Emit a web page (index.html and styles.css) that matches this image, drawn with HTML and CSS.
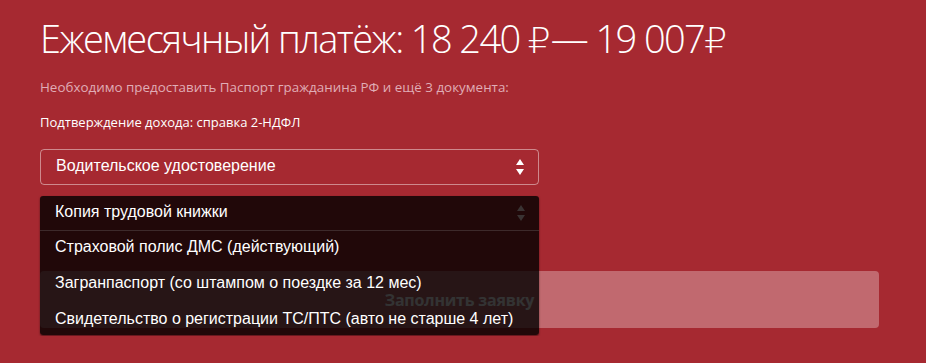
FILE: index.html
```html
<!DOCTYPE html>
<html lang="ru">
<head>
<meta charset="utf-8">
<link rel="stylesheet" href="styles.css">
</head>
<body>
<div class="page">
  <h1 class="title">Ежемесячный платёж: 18 240 <span class="rub">₽</span>— 19 007<span class="rub">₽</span></h1>
  <p class="note">Необходимо предоставить Паспорт гражданина РФ и ещё 3 документа:</p>
  <p class="income">Подтверждение дохода: справка 2-НДФЛ</p>
  <div class="select">
    <span>Водительское удостоверение</span>
    <span class="arrows"><i class="up"></i><i class="down"></i></span>
  </div>
  <div class="stack">
    <div class="button">Заполнить заявку</div>
    <div class="dropdown">
      <div class="dd-head">
        <span>Копия трудовой книжки</span>
        <span class="arrows dim"><i class="up"></i><i class="down"></i></span>
      </div>
      <ul class="dd-list">
        <li>Страховой полис ДМС (действующий)</li>
        <li>Загранпаспорт (со штампом о поездке за 12 мес)</li>
        <li>Свидетельство о регистрации ТС/ПТС (авто не старше 4 лет)</li>
      </ul>
    </div>
  </div>
</div>
</body>
</html>
```

FILE: styles.css
```css
html, body {
  margin: 0;
  padding: 0;
  background: #a62931;
  overflow: hidden;
}
.page {
  padding: 0 47px 0 40px;
  width: 839px;
  font-family: "Open Sans", "Noto Sans", sans-serif;
  color: #fff;
}
.title {
  margin: 0;
  padding-top: 12px;
  height: 52px;
  font-family: "Open Sans", sans-serif;
  font-weight: 300;
  font-size: 38px;
  line-height: 52px;
  letter-spacing: -1.6px;
  white-space: nowrap;
}
.title .rub {
  font-family: "DejaVu Sans", sans-serif;
  font-weight: 200;
  letter-spacing: 0;
  font-size: 36px;
  line-height: 0;
}
.note {
  margin: 14px 0 0;
  font-size: 13.4px;
  line-height: 18px;
  color: #e0adb6;
}
.income {
  margin: 17px 0 0;
  font-size: 13px;
  line-height: 18px;
}
.select {
  margin-top: 18px;
  width: 499px;
  height: 36px;
  box-sizing: border-box;
  border: 1px solid rgba(255,255,255,0.45);
  border-radius: 4px;
  display: flex;
  align-items: center;
  justify-content: space-between;
  padding: 0 14px 2px 15px;
  font-family: "Liberation Sans", Arial, sans-serif;
  font-size: 16px;
}
.arrows {
  display: flex;
  flex-direction: column;
  gap: 4px;
  padding-top: 2px;
}
.arrows i {
  display: block;
  width: 0;
  height: 0;
  border-left: 4px solid transparent;
  border-right: 4px solid transparent;
}
.arrows .up { border-bottom: 6px solid #fff; }
.arrows .down { border-top: 6px solid #fff; }
.arrows.dim .up { border-bottom-color: #3a3333; }
.arrows.dim .down { border-top-color: #3a3333; }
.stack {
  position: relative;
  margin-top: 11px;
  height: 140px;
}
.button {
  position: absolute;
  left: 0;
  top: 75px;
  width: 839px;
  height: 57px;
  border-radius: 4px;
  background: rgba(255,255,255,0.3);
  display: flex;
  align-items: center;
  justify-content: center;
  font-family: "Open Sans", "Noto Sans", sans-serif;
  font-weight: 700;
  font-size: 16px;
  letter-spacing: -0.2px;
  color: #fff;
}
.dropdown {
  position: absolute;
  left: 0;
  top: 0;
  width: 499px;
  height: 139px;
  overflow: hidden;
  background: rgba(0,0,0,0.8);
  border-radius: 3px;
  box-shadow: 0 1px 2px rgba(0,0,0,0.5);
  font-family: "Liberation Sans", Arial, sans-serif;
  font-size: 16px;
}
.dd-head {
  height: 35px;
  box-sizing: border-box;
  border-bottom: 1px solid #3d2a2b;
  display: flex;
  align-items: center;
  justify-content: space-between;
  padding: 0 14px 3px 15px;
}
.dd-list {
  list-style: none;
  margin: 0;
  padding: 0;
}
.dd-list li {
  height: 36px;
  line-height: 32px;
  padding-left: 15px;
  white-space: nowrap;
}
```
